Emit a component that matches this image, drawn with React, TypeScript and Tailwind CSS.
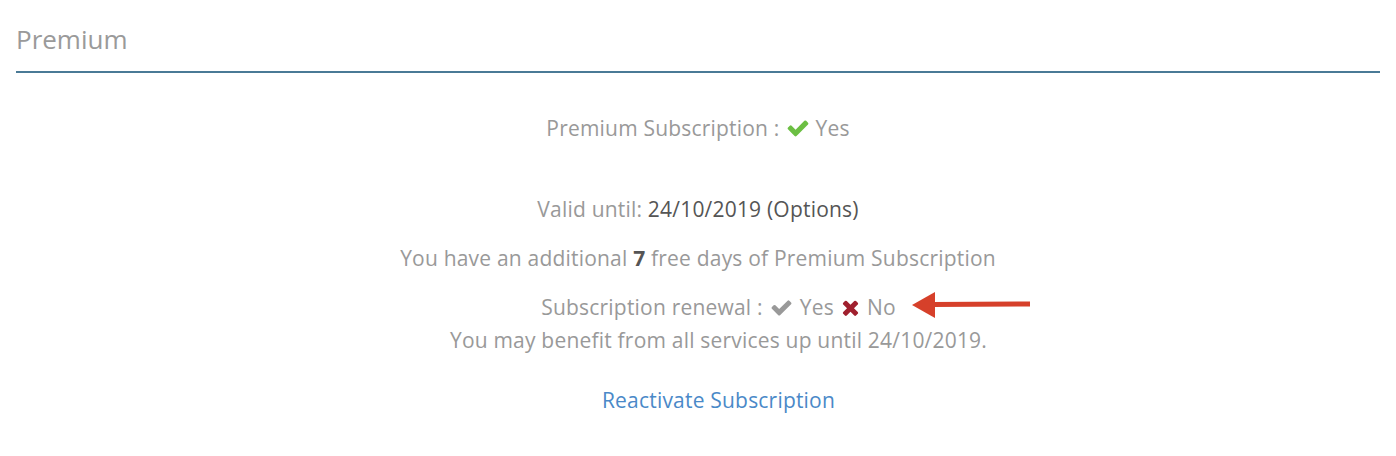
import { useState } from 'react'

const FONT = { fontFamily: '"Open Sans", "Noto Sans", sans-serif' }

function Check({ className }: { className: string }) {
  return (
    <svg viewBox="0 0 1792 1792" className={className} fill="currentColor">
      <path d="M1671 566q0 40-28 68l-724 724-136 136q-28 28-68 28t-68-28l-136-136-362-362q-28-28-28-68t28-68l136-136q28-28 68-28t68 28l294 295 656-657q28-28 68-28t68 28l136 136q28 28 28 68z" />
    </svg>
  )
}

function Cross({ className }: { className: string }) {
  return (
    <svg viewBox="0 0 1408 1792" className={className} fill="currentColor">
      <path d="M1298 1322q0 40-28 68l-136 136q-28 28-68 28t-68-28l-294-294-294 294q-28 28-68 28t-68-28l-136-136q-28-28-28-68t28-68l294-294-294-294q-28-28-28-68t28-68l136-136q28-28 68-28t68 28l294 294 294-294q28-28 68-28t68 28l136 136q28 28 28 68t-28 68l-294 294 294 294q28 28 28 68z" />
    </svg>
  )
}

export default function App() {
  const [renew] = useState(false)

  return (
    <div className="min-h-[456px] bg-white px-4 pt-[20px] text-[#999]" style={FONT}>
      <h2 className="text-[26px] leading-[38px] text-[#9a9a9a]">Premium</h2>
      <div className="mt-[13px] h-[2px] bg-[#4a7a96]" />

      <div className="flex flex-col items-center text-[21px] leading-[28px] tracking-[0.2px]">
        <div className="mt-[41px] flex items-center gap-[6px]">
          <span>Premium Subscription :</span>
          <Check className="h-[24px] w-[24px] text-[#6cbf43]" />
          <span>Yes</span>
        </div>

        <div className="mt-[53px]">
          Valid until: <span className="text-[#555]">24/10/2019 (Options)</span>
        </div>

        <div className="mt-[21px]">
          You have an additional <b className="text-[#555]">7</b> free days of Premium Subscription
        </div>

        {/* renewal block sits slightly right of the centre line */}
        <div className="mt-[21px] flex w-full flex-col items-center pl-[41px]">
          <div className="relative flex items-center gap-[7px]">
            <span>Subscription renewal :</span>
            <Check className={`h-[23px] w-[23px] ${renew ? 'text-[#6cbf43]' : 'text-[#999]'}`} />
            <span>Yes</span>
            <Cross className="h-[23px] w-[19px] text-[#a0202e]" />
            <span>No</span>
            {/* annotation arrow */}
            <svg
              viewBox="0 0 120 26"
              className="absolute left-[calc(100%+16px)] top-[-1px] h-[26px] w-[120px]"
            >
              <path d="M20 12.5 L118 12" stroke="#d6402a" strokeWidth="5" />
              <path d="M0 13 L23 0 L23 26 Z" fill="#d6402a" />
            </svg>
          </div>

          <div className="mt-[5px]">You may benefit from all services up until 24/10/2019.</div>

          <a href="#" className="mt-[32px] text-[#4a89c8]">
            Reactivate Subscription
          </a>
        </div>
      </div>
    </div>
  )
}
